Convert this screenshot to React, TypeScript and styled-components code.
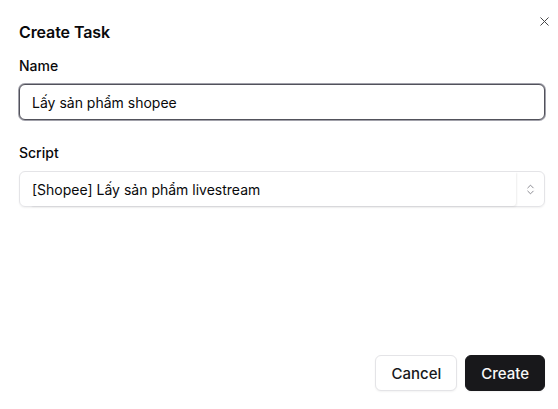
import React from 'react';
import styled, { createGlobalStyle } from 'styled-components';
import { X, ChevronsUpDown } from 'lucide-react';

const Global = createGlobalStyle`
  html, body {
    margin: 0;
    padding: 0;
    background: #fff;
  }
  body {
    font-family: Inter, "Noto Sans", sans-serif;
    color: #09090b;
  }
  * { box-sizing: border-box; }
`;

const Dialog = styled.div`
  position: relative;
  height: 409px;
  display: flex;
  flex-direction: column;
  padding: 20px 13px 18px 19px;
`;

const Title = styled.h2`
  margin: 0;
  font-size: 16px;
  line-height: 24px;
  font-weight: 600;
  letter-spacing: -0.1px;
`;

const CloseButton = styled.button`
  position: absolute;
  top: 13px;
  right: 6px;
  width: 16px;
  height: 16px;
  padding: 0;
  border: none;
  background: none;
  color: #09090b;
  opacity: 0.75;
  display: grid;
  place-items: center;
`;

const Field = styled.div<{ $top: number }>`
  display: flex;
  flex-direction: column;
  margin-top: ${(p) => p.$top}px;
`;

const Label = styled.label<{ $gap: number }>`
  font-size: 14px;
  line-height: 20px;
  font-weight: 500;
  margin-bottom: ${(p) => p.$gap}px;
`;

const Input = styled.input`
  height: 36px;
  padding: 0 12px;
  border: 1px solid #52525b;
  border-radius: 6px;
  box-shadow: 0 0 0 1px #a1a1aa;
  font-family: inherit;
  font-size: 14px;
  color: #09090b;
  outline: none;
`;

const SelectBox = styled.div`
  height: 36px;
  border: 1px solid #e4e4e7;
  border-radius: 6px;
  box-shadow: 0 1px 2px rgba(0, 0, 0, 0.06);
  display: flex;
  align-items: stretch;
  padding-left: 11px;
  font-size: 14px;
`;

const SelectValue = styled.span`
  flex: 1;
  display: flex;
  align-items: center;
  padding-left: 1px;
  box-shadow: 1px 1px 2px rgba(0, 0, 0, 0.07);
  border-radius: 0 0 4px 0;
`;

const SelectIcon = styled.span`
  width: 28px;
  display: grid;
  place-items: center;
  color: #71717a;
`;

const Footer = styled.div`
  margin-top: auto;
  display: flex;
  justify-content: flex-end;
  gap: 8px;
`;

const Button = styled.button<{ $primary?: boolean }>`
  height: 36px;
  padding: 0 15px;
  border-radius: 6px;
  font-family: inherit;
  font-size: 15px;
  font-weight: 500;
  border: 1px solid ${(p) => (p.$primary ? '#18181b' : '#e4e4e7')};
  background: ${(p) => (p.$primary ? '#18181b' : '#fff')};
  color: ${(p) => (p.$primary ? '#fafafa' : '#18181b')};
  box-shadow: 0 1px 2px rgba(0, 0, 0, 0.05);
`;

export default function App() {
  return (
    <>
      <Global />
      <Dialog>
        <Title>Create Task</Title>
        <CloseButton aria-label="Close">
          <X size={15} strokeWidth={1.6} />
        </CloseButton>
        <Field $top={12}>
          <Label $gap={8}>Name</Label>
          <Input defaultValue="Lấy sản phẩm shopee" />
        </Field>
        <Field $top={23}>
          <Label $gap={8}>Script</Label>
          <SelectBox>
            <SelectValue>[Shopee] Lấy sản phẩm livestream</SelectValue>
            <SelectIcon>
              <ChevronsUpDown size={13} strokeWidth={1.5} />
            </SelectIcon>
          </SelectBox>
        </Field>
        <Footer>
          <Button>Cancel</Button>
          <Button $primary>Create</Button>
        </Footer>
      </Dialog>
    </>
  );
}
